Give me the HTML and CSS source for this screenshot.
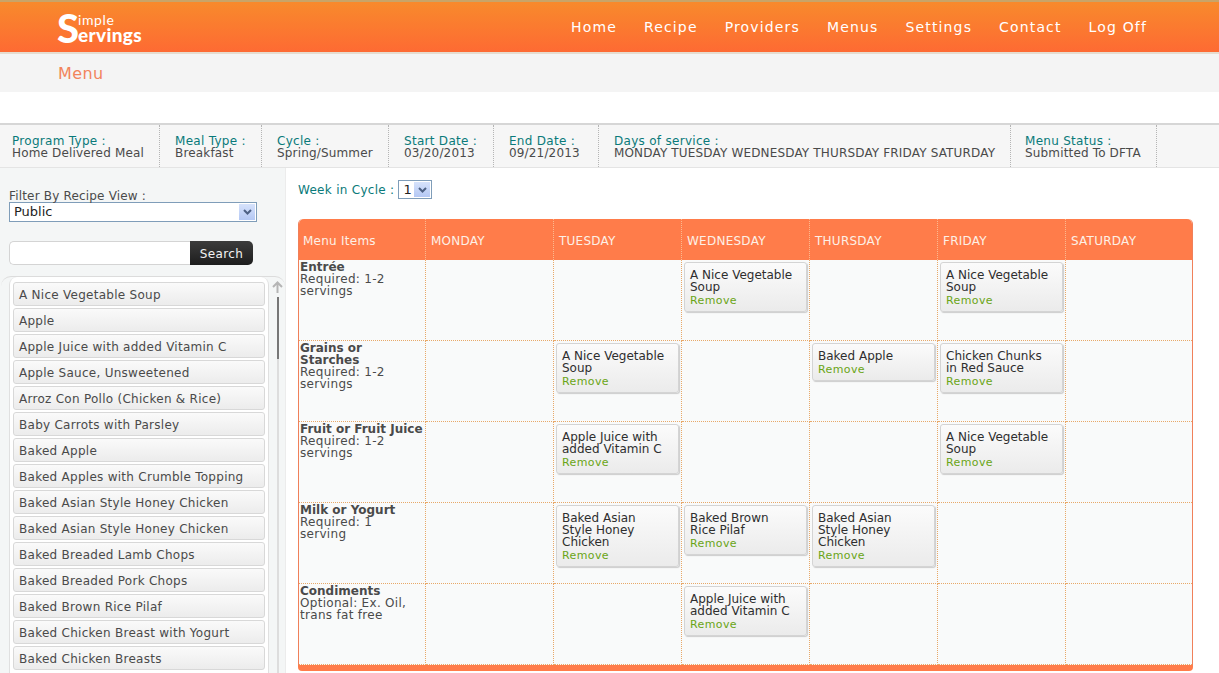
FILE: index.html
```html
<!DOCTYPE html>
<html lang="en">
<head>
    <meta charset="UTF-8">
    <meta name="viewport" content="width=device-width, initial-scale=1.0">
    <title>Simple Servings - Menu</title>
    <link rel="stylesheet" href="styles.css">
</head>
<body>
    <div class="header">
        <a class="logo" href="#">
            <span class="logo_s">S</span>
            <span class="logo_words">
                <span class="logo_top">imple</span>
                <span class="logo_bottom">ervings</span>
            </span>
        </a>
        <div class="nav">
            <a href="#">Home</a>
            <a href="#">Recipe</a>
            <a href="#">Providers</a>
            <a href="#">Menus</a>
            <a href="#">Settings</a>
            <a href="#">Contact</a>
            <a href="#">Log Off</a>
        </div>
    </div>

    <div class="title_bar">Menu</div>
    <div class="spacer"></div>

    <div class="info_bar">
        <div class="info_item w_program"><span class="info_label">Program Type :</span><span>Home Delivered Meal</span></div>
        <div class="info_item w_meal"><span class="info_label">Meal Type :</span><span>Breakfast</span></div>
        <div class="info_item w_cycle"><span class="info_label">Cycle :</span><span>Spring/Summer</span></div>
        <div class="info_item w_start"><span class="info_label">Start Date :</span><span>03/20/2013</span></div>
        <div class="info_item w_end"><span class="info_label">End Date :</span><span>09/21/2013</span></div>
        <div class="info_item w_days"><span class="info_label">Days of service :</span><span>MONDAY TUESDAY WEDNESDAY THURSDAY FRIDAY SATURDAY</span></div>
        <div class="info_item w_status"><span class="info_label">Menu Status :</span><span>Submitted To DFTA</span></div>
    </div>

    <div class="content">
        <div class="sidebar">
            <div class="filter_label">Filter By Recipe View :</div>
            <div class="select_box filter_select">
                <span class="select_value">Public</span>
                <span class="select_arrow"><svg width="9" height="6" viewBox="0 0 9 6"><path d="M1 1 L4.5 4.5 L8 1" fill="none" stroke="#4d6185" stroke-width="2"/></svg></span>
            </div>
            <div class="search_row">
                <input class="search_input" type="text">
                <button class="search_btn">Search</button>
            </div>
            <div class="list_wrap">
                <div class="recipe_list">
                    <div class="recipe">A Nice Vegetable Soup</div>
                    <div class="recipe">Apple</div>
                    <div class="recipe">Apple Juice with added Vitamin C</div>
                    <div class="recipe">Apple Sauce, Unsweetened</div>
                    <div class="recipe">Arroz Con Pollo (Chicken &amp; Rice)</div>
                    <div class="recipe">Baby Carrots with Parsley</div>
                    <div class="recipe">Baked Apple</div>
                    <div class="recipe">Baked Apples with Crumble Topping</div>
                    <div class="recipe">Baked Asian Style Honey Chicken</div>
                    <div class="recipe">Baked Asian Style Honey Chicken</div>
                    <div class="recipe">Baked Breaded Lamb Chops</div>
                    <div class="recipe">Baked Breaded Pork Chops</div>
                    <div class="recipe">Baked Brown Rice Pilaf</div>
                    <div class="recipe">Baked Chicken Breast with Yogurt</div>
                    <div class="recipe">Baked Chicken Breasts</div>
                </div>
                <div class="scroll_track">
                    <svg class="scroll_arrow" width="11" height="12" viewBox="0 0 11 12"><path d="M5.5 12 V2 M1 6 L5.5 1.5 L10 6" fill="none" stroke="#b5b5b5" stroke-width="2"/></svg>
                    <div class="scroll_line"><div class="scroll_thumb"></div></div>
                </div>
            </div>
        </div>

        <div class="main">
            <div class="week_row">
                <span class="info_label">Week in Cycle :</span>
                <div class="select_box week_select">
                    <span class="select_value">1</span>
                    <span class="select_arrow"><svg width="9" height="6" viewBox="0 0 9 6"><path d="M1 1 L4.5 4.5 L8 1" fill="none" stroke="#4d6185" stroke-width="2"/></svg></span>
                </div>
            </div>

            <table class="menu_table">
                <thead>
                    <tr>
                        <th>Menu Items</th><th>MONDAY</th><th>TUESDAY</th><th>WEDNESDAY</th><th>THURSDAY</th><th>FRIDAY</th><th>SATURDAY</th>
                    </tr>
                </thead>
                <tbody>
                    <tr>
                        <td class="item_cell"><b>Entrée</b><br>Required: 1-2 servings</td>
                        <td></td>
                        <td></td>
                        <td><div class="dish">A Nice Vegetable Soup<a href="#">Remove</a></div></td>
                        <td></td>
                        <td><div class="dish">A Nice Vegetable Soup<a href="#">Remove</a></div></td>
                        <td></td>
                    </tr>
                    <tr>
                        <td class="item_cell"><b>Grains or Starches</b><br>Required: 1-2 servings</td>
                        <td></td>
                        <td><div class="dish">A Nice Vegetable Soup<a href="#">Remove</a></div></td>
                        <td></td>
                        <td><div class="dish">Baked Apple<a href="#">Remove</a></div></td>
                        <td><div class="dish">Chicken Chunks in Red Sauce<a href="#">Remove</a></div></td>
                        <td></td>
                    </tr>
                    <tr>
                        <td class="item_cell"><b>Fruit or Fruit Juice</b><br>Required: 1-2 servings</td>
                        <td></td>
                        <td><div class="dish">Apple Juice with added Vitamin C<a href="#">Remove</a></div></td>
                        <td></td>
                        <td></td>
                        <td><div class="dish">A Nice Vegetable Soup<a href="#">Remove</a></div></td>
                        <td></td>
                    </tr>
                    <tr>
                        <td class="item_cell"><b>Milk or Yogurt</b><br>Required: 1<br>serving</td>
                        <td></td>
                        <td><div class="dish">Baked Asian Style Honey Chicken<a href="#">Remove</a></div></td>
                        <td><div class="dish">Baked Brown Rice Pilaf<a href="#">Remove</a></div></td>
                        <td><div class="dish">Baked Asian Style Honey Chicken<a href="#">Remove</a></div></td>
                        <td></td>
                        <td></td>
                    </tr>
                    <tr>
                        <td class="item_cell"><b>Condiments</b><br>Optional: Ex. Oil, trans fat free</td>
                        <td></td>
                        <td></td>
                        <td><div class="dish">Apple Juice with added Vitamin C<a href="#">Remove</a></div></td>
                        <td></td>
                        <td></td>
                        <td></td>
                    </tr>
                </tbody>
            </table>
            <div class="table_foot"></div>
        </div>
    </div>
</body>
</html>
```

FILE: styles.css
```css
*{
    box-sizing: border-box;
}
html, body{
    margin: 0;
    height: 673px;
    overflow: hidden;
}
body{
    font-family: 'DejaVu Sans', Verdana, sans-serif;
    font-size: 12px;
    line-height: 12px;
    color: #4a4a4a;
    background-color: white;
}
a{
    text-decoration: none;
}
.header{
    height: 54px;
    display: flex;
    justify-content: space-between;
    align-items: center;
    padding: 0 57px;
    background: linear-gradient(to bottom, #f88a2c, #fe6a33);
    border-top: 2px solid #c9a468;
    border-bottom: 2px solid #e6dccf;
}
.logo{
    display: flex;
    align-items: center;
    color: white;
    font-family: Lato, sans-serif;
    font-weight: bold;
    margin-top: 1px;
}
.logo_s{
    font-size: 40px;
    line-height: 30px;
    font-weight: 900;
}
.logo_words{
    display: flex;
    flex-direction: column;
    gap: 1px;
    margin-left: -1px;
}
.logo_top{
    font-size: 14px;
    line-height: 12px;
    font-weight: normal;
    letter-spacing: 0.6px;
}
.logo_bottom{
    font-size: 19px;
    line-height: 15px;
    font-weight: 900;
    letter-spacing: 0.3px;
}
.nav{
    display: flex;
    gap: 27px;
    padding-right: 15px;
}
.nav a{
    color: white;
    font-size: 14px;
    line-height: 16px;
    letter-spacing: 1.15px;
}
.title_bar{
    height: 38px;
    padding: 11px 0 0 58px;
    background-color: #f4f4f4;
    color: #f2845c;
    font-size: 16px;
    line-height: 18px;
    letter-spacing: 0.4px;
}
.spacer{
    height: 31px;
}
.info_bar{
    height: 45px;
    display: flex;
    background-color: #f6f6f6;
    border-top: 2px solid #d6d6d6;
    border-bottom: 1px solid #e4e4e4;
    letter-spacing: 0.16px;
}
.info_item{
    display: flex;
    flex-direction: column;
    padding: 10px 0 0 12px;
    border-right: 1px dotted #b5b5b5;
    white-space: nowrap;
}
.w_program{ width: 160px; }
.w_meal{ width: 102px; padding-left: 15px; }
.w_cycle{ width: 127px; padding-left: 15px; }
.w_start{ width: 105px; padding-left: 15px; }
.w_end{ width: 105px; padding-left: 15px; }
.w_days{ width: 412px; padding-left: 15px; }
.w_status{ width: 146px; padding-left: 14px; }
.info_label{
    color: #0a7a7a;
    letter-spacing: 0.29px;
}
.content{
    display: flex;
}
.sidebar{
    width: 286px;
    height: 505px;
    flex: none;
    padding: 22px 0 0 0;
    background-color: #f4f6f6;
    border-right: 1px solid #ececec;
}
.filter_label{
    margin-left: 9px;
    letter-spacing: 0.18px;
}
.select_box{
    display: flex;
    justify-content: space-between;
    align-items: center;
    background-color: white;
    border: 1px solid #7f9db9;
    color: #222;
    font-size: 13px;
}
.select_arrow{
    width: 16px;
    display: flex;
    align-items: center;
    justify-content: center;
    background: linear-gradient(to bottom, #d6e2fb, #b4c8f4);
}
.filter_select{
    width: 248px;
    height: 20px;
    margin: 0 0 0 9px;
    padding: 1px 1px 1px 4px;
}
.filter_select .select_arrow{
    height: 16px;
}
.search_row{
    display: flex;
    margin: 19px 0 0 9px;
}
.search_input{
    width: 181px;
    height: 24px;
    margin: 0;
    border: 1px solid #d4d4d4;
    border-right: none;
    border-radius: 5px 0 0 5px;
    background-color: white;
}
.search_btn{
    width: 63px;
    height: 24px;
    padding: 1px 0 0 0;
    border: none;
    border-radius: 0 5px 5px 0;
    background: linear-gradient(to bottom, #3c3c3c, #1d1d1d);
    color: #f2f2f2;
    font-family: inherit;
    font-size: 12px;
    letter-spacing: 0.4px;
}
.list_wrap{
    display: flex;
    height: 420px;
    margin-top: 11px;
    border-top: 1px solid #dcdcdc;
    border-radius: 10px 10px 0 0;
    margin-left: 1px;
    width: 284px;
}
.recipe_list{
    width: 260px;
    padding: 5px 3px 0 3px;
    margin-left: 8px;
    background-color: white;
    border: 1px solid #e0e0e0;
    border-radius: 8px 8px 0 0;
    border-top: none;
    overflow: hidden;
}
.recipe{
    height: 24px;
    margin-bottom: 2px;
    padding: 6px 0 0 5px;
    border: 1px solid #d8d8d8;
    border-radius: 3px;
    background: linear-gradient(to bottom, #fafafa, #ececec);
    white-space: nowrap;
    letter-spacing: 0.27px;
}
.scroll_track{
    width: 11px;
    margin-left: 3px;
    display: flex;
    flex-direction: column;
    align-items: center;
    padding-top: 4px;
}
.scroll_arrow{
    flex: none;
}
.scroll_line{
    flex: 1;
    width: 2px;
    margin-top: 4px;
    background-color: #dddddd;
}
.scroll_thumb{
    height: 62px;
    background-color: #777;
}
.main{
    flex: 1;
    padding: 12px 0 0 12px;
}
.week_row{
    display: flex;
    align-items: center;
    gap: 4px;
    height: 19px;
}
.week_select{
    width: 34px;
    height: 19px;
    padding: 1px;
    font-size: 13px;
}
.week_select .select_value{
    padding-left: 3px;
}
.week_select .select_arrow{
    height: 15px;
}
.menu_table{
    width: 895px;
    margin-top: 20px;
    border-collapse: separate;
    border-spacing: 0;
    table-layout: fixed;
    border-right: 1px solid #f0805a;
    border-left: 1px solid #f0805a;
    border-radius: 5px 5px 0 0;
    background-color: #f9fafa;
}
.menu_table th{
    width: 128px;
    height: 41px;
    padding: 3px 0 0 5px;
    background-color: #ff7c4a;
    color: #fdf0e6;
    font-weight: normal;
    text-align: left;
    letter-spacing: 0.25px;
    border-right: 1px dotted #fbb98f;
}
.menu_table th:first-child{
    width: 127px;
    padding-left: 4px;
    border-radius: 5px 0 0 0;
}
.menu_table th:last-child{
    width: 126px;
    border-radius: 0 5px 0 0;
    border-right: none;
}
.menu_table td{
    height: 81px;
    padding: 2px 2px 0 2px;
    vertical-align: top;
    border-right: 1px dotted #e8a868;
    border-bottom: 1px dotted #e8a868;
    color: #2e2e2e;
}
.menu_table td:last-child{
    border-right: none;
}
.menu_table td.item_cell{
    padding: 1px 1px 0 1px;
    color: #4a4a4a;
    letter-spacing: 0.3px;
}
.item_cell b{
    letter-spacing: 0;
}
.dish{
    width: 123px;
    padding: 6px 10px 4px 5px;
    border: 1px solid #d4d4d4;
    border-radius: 3px;
    background: linear-gradient(to bottom, #fbfbfb, #ebebeb);
    box-shadow: 1px 1px 1px #ccc;
}
.dish a{
    display: block;
    margin-top: 2px;
    color: #6aa516;
    font-size: 11px;
    letter-spacing: 0.4px;
}
.table_foot{
    width: 895px;
    height: 6px;
    background-color: #ff7c4a;
    border-radius: 0 0 4px 4px;
}
```
